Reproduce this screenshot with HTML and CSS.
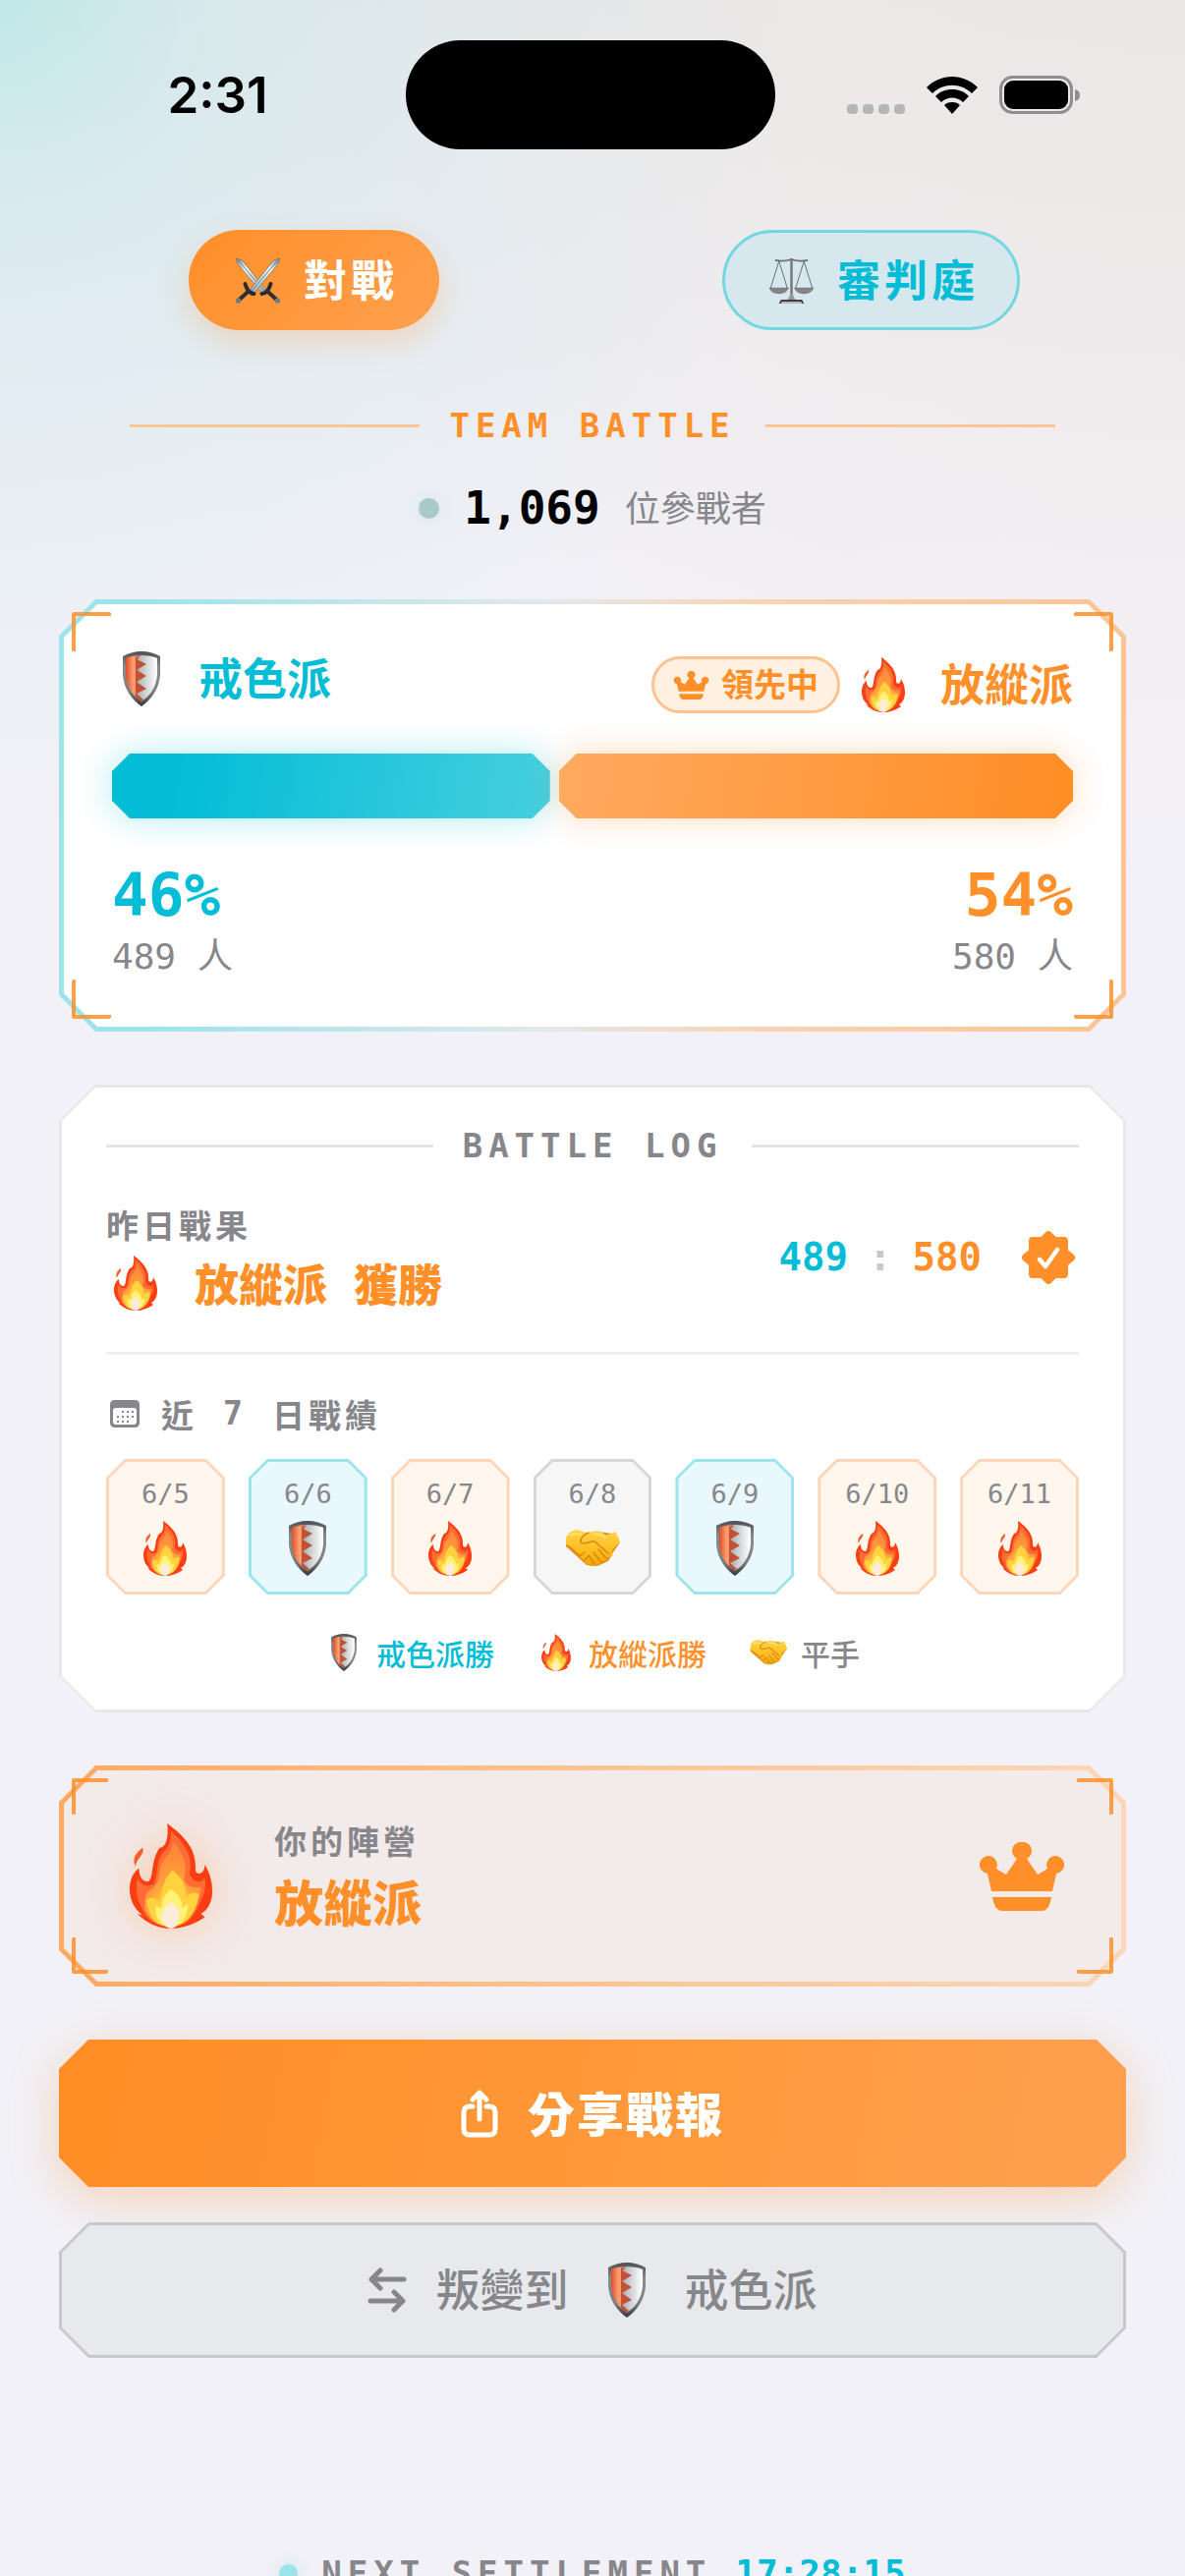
FILE: index.html
```html
<!DOCTYPE html>
<html lang="zh-Hant">
<head>
<meta charset="utf-8">
<meta name="viewport" content="width=device-width, initial-scale=1">
<title>Team Battle</title>
<link rel="stylesheet" href="styles.css">
</head>
<body>
<svg class="sprite" width="0" height="0" aria-hidden="true">
  <defs>
    <radialGradient id="fire-core" cx="0.5" cy="0.9" r="0.75">
      <stop offset="0" stop-color="#fff58a"/><stop offset="0.3" stop-color="#ffd03a"/><stop offset="0.62" stop-color="#ff9f3c"/><stop offset="1" stop-color="#ff8a3a"/>
    </radialGradient>
    <linearGradient id="shield-right" x1="0" x2="1" y1="0" y2="0">
      <stop offset="0" stop-color="#a9adb0"/><stop offset="0.5" stop-color="#d5d9dc"/><stop offset="1" stop-color="#ffffff"/>
    </linearGradient>
    <linearGradient id="shield-left" x1="0" x2="1" y1="0" y2="0">
      <stop offset="0" stop-color="#dc4f2b"/><stop offset="0.5" stop-color="#ffa273"/><stop offset="1" stop-color="#d35a38"/>
    </linearGradient>
    <linearGradient id="shield-rim" x1="0" x2="0" y1="0" y2="1">
      <stop offset="0" stop-color="#4e4f52"/><stop offset="0.3" stop-color="#8b8c8f"/><stop offset="0.75" stop-color="#7d7e81"/><stop offset="1" stop-color="#333436"/>
    </linearGradient>
    <linearGradient id="hand-skin" x1="0" x2="0" y1="0" y2="1">
      <stop offset="0" stop-color="#ffd54a"/><stop offset="0.6" stop-color="#fcbc1d"/><stop offset="1" stop-color="#f0a010"/>
    </linearGradient>
    <linearGradient id="blade" x1="0" x2="1" y1="0" y2="1">
      <stop offset="0" stop-color="#77858c"/><stop offset="0.3" stop-color="#e9f4f6"/><stop offset="1" stop-color="#a3b3b9"/>
    </linearGradient>
  </defs>
  <symbol id="fire" viewBox="0 0 44 56">
    <path fill="#fb3d12" d="M20 0C28 6 36 13 35 25C36 28 40 27 40 22C44 28 45 37 43 42C42 45 40 47 38 48L40 50C34 54 28 56 22 56C15 56 9 53 4 48L7 49C2 45 0 40 0 35C0 30 2 26 5 24C5 29 7 31 10 31C13 29 11 20 16 13C19 13 21 8 20 0Z"/>
    <path fill="#f4602b" d="M7 13C8 17 4 18 3 23C1 18 4 15 7 13Z"/>
    <path fill="#ff6b35" d="M22 4C29 10 34 17 32 27C34 32 38 32 40 29C41 33 40 38 37 43C34 51 29 55 22 55C14 55 9 51 7 46C4 41 3 36 4 29C6 33 10 34 13 32C15 26 14 20 18 15C21 13 22 9 22 4Z"/>
    <path fill="url(#fire-core)" d="M23 10C29 16 31 22 29 30C31 35 36 34 38 34C38 39 35 43 33 45C31 52 27 55 22 55C15 55 11 51 8 46C8 41 8 38 10 36C14 34 16 30 16 25C17 18 23 17 23 10Z"/>
    <path fill="#ffd23e" d="M23 25C29 30 30 34 30 39C33 37 35 36 37 38C36 46 31 55 22 55C13 55 10 48 9 41C12 38 15 41 16 42C17 36 18 29 23 25Z"/>
    <path fill="#fff276" d="M22 35C27 38 28 42 28 45L31 43C31 49 28 55 22 55C16 55 13 50 14 44L17 45C17 41 19 37 22 35Z"/>
    <path fill="#fdebdc" d="M22 42C26 44 27 48 26 51Q25 56 22 56Q17 55 17 50C17 47 19 44 22 42Z"/>
  </symbol>
  <symbol id="shield" viewBox="0 0 38 56">
    <path fill="url(#shield-rim)" d="M19 0C26 0 33 2 38 5V24C37 38 29 49 19 56C9 49 1 38 0 24V5C5 2 12 0 19 0Z"/>
    <path fill="url(#shield-left)" d="M19 4C13 4 7 5 3 7V24C4 36 10 45 19 51Z"/>
    <path fill="url(#shield-right)" d="M16 4C25 4 31 5 35 7V24C34 36 28 45 19 51L14 45Z"/>
    <path fill="#c25235" d="M13 6L19 4L14 8L24 13L14 19L24 25L14 31L24 38L14 43L21 49L19 51L13 46Z"/>
  </symbol>
  <symbol id="handshake" viewBox="0 0 56 38">
    <path fill="#e48d10" d="M1 14L12 3L24 4L35 2L47 4L56 13L49 23L44 32L33 37L22 36L11 26L1 17Z"/>
    <path fill="url(#hand-skin)" d="M1 9C2 4 6 1 12 0C17 1 20 3 24 3C29 1 36 0 41 5C45 6 48 3 51 2C53 5 55 9 56 13C53 16 50 18 48 21C50 26 47 29 44 28C43 32 40 33 37 32C36 36 33 37 31 35C29 38 25 38 24 35C21 35 19 33 20 31C17 31 15 28 16 26C11 23 8 17 1 15Z"/>
    <path fill="none" stroke="#d98812" stroke-width="1.5" stroke-linecap="round" d="M24 3C19 5 15 9 16 13C20 16 25 11 30 12L44 24M34 20L42 29M29 23L36 32M24 26L30 35M20 31L24 27M16 26L20 23"/>
    <path fill="none" stroke="#ffe27a" stroke-width="2" stroke-linecap="round" d="M29 5C34 3 38 6 41 8M5 6C9 3 13 4 17 5"/>
  </symbol>
  <symbol id="swords" viewBox="0 0 46 47">
    <g id="sword-one">
      <path fill="url(#blade)" stroke="#59666d" stroke-width="0.6" d="M1 1L7 3L31 33L27 36L2 6Z"/>
      <path fill="none" stroke="#65737a" stroke-width="0.9" d="M3 3L29 34"/>
      <path fill="none" stroke="#2a2b2d" stroke-width="4" stroke-linecap="round" d="M27 37Q33 37 36 27"/>
      <path stroke="#2f3032" stroke-width="4" d="M31 33L42 43"/>
      <circle cx="43" cy="44" r="2.700" fill="#76797d"/>
    </g>
    <use href="#sword-one" transform="matrix(-1 0 0 1 46 0)"/>
  </symbol>
  <symbol id="scales" viewBox="0 0 48 48">
    <g fill="none" stroke="#6d6b6d" stroke-width="1">
      <path d="M11 4L2 33M11 4L20 33M37 4L28 33M37 4L46 33"/>
      <path stroke-width="1.800" d="M7 3Q16 5 24 2Q32 5 41 3"/>
      <path stroke="#7b797b" stroke-width="2.600" d="M24 1V43"/>
      <path stroke="#4c4a4c" d="M1 32H21M27 32H47"/>
    </g>
    <path fill="#858386" d="M1 32H21Q19 38 11 38Q3 38 1 32ZM27 32H47Q45 38 37 38Q29 38 27 32Z"/>
    <path fill="#9a989a" d="M23 38H25L28 44H20Z"/>
    <path fill="#423f41" d="M13 44H35L37 48H11Z"/>
    <path fill="#b9b7b9" d="M14 46H34L35 48H13Z"/>
  </symbol>
  <symbol id="crown" viewBox="0 0 88 70">
    <path fill="currentColor" d="M44 0A9 9 0 0 1 49 17L60 33L70 27A9 9 0 1 1 79 32L75 50H13L9 32A9 9 0 1 1 18 27L28 33L39 17A9 9 0 0 1 44 0Z"/>
    <path fill="currentColor" d="M14 56H74Q72 70 64 70H24Q16 70 14 56Z"/>
  </symbol>
</svg>

<div class="screen">
  <header class="status">
    <time class="status__time">2:31</time>
    <div class="status__island"></div>
    <div class="status__icons">
      <span class="cell"><i></i><i></i><i></i><i></i></span>
      <svg class="wifi" viewBox="0 0 52 38" aria-hidden="true">
        <path d="M26 0C36 0 45 4 52 11L46 17C35 6 17 6 6 17L0 11C7 4 16 0 26 0Z"/>
        <path d="M26 13C33 13 38 15 43 20L37 26C31 20 21 20 15 26L9 20C14 15 19 13 26 13Z"/>
        <path d="M26 26C30 26 32 27 34 29L26 38L18 29C20 27 22 26 26 26Z"/>
      </svg>
      <svg class="battery" viewBox="0 0 82 39" aria-hidden="true">
        <rect x="1.500" y="1.500" width="72" height="36" rx="12" fill="none" stroke="#8e8e92" stroke-width="3"/>
        <rect x="5" y="5" width="65" height="29" rx="9"/>
        <path fill="#8e8e92" d="M77 14Q82 15 82 20Q82 25 77 26Z"/>
      </svg>
    </div>
  </header>

  <nav class="tabs">
    <button class="tab tab--active" type="button"><svg class="tab__icon" aria-hidden="true"><use href="#swords"/></svg><span class="tab__text">對戰</span></button>
    <button class="tab" type="button"><svg class="tab__icon" aria-hidden="true"><use href="#scales"/></svg><span class="tab__text">審判庭</span></button>
  </nav>

  <h1 class="rule rule--accent">TEAM BATTLE</h1>

  <p class="players"><span class="players__dot"></span><strong class="players__count">1,069</strong><span class="players__unit">位參戰者</span></p>

  <main class="content">
    <section class="panel panel--versus">
      <span class="bracket bracket--tl"></span><span class="bracket bracket--tr"></span><span class="bracket bracket--bl"></span><span class="bracket bracket--br"></span>
      <div class="teams">
        <div class="team team--guard"><svg class="emoji" aria-hidden="true"><use href="#shield"/></svg><h2 class="team__name">戒色派</h2></div>
        <div class="team team--flame">
          <span class="badge"><svg class="badge__crown" aria-hidden="true"><use href="#crown"/></svg><span class="badge__text">領先中</span></span>
          <svg class="emoji" aria-hidden="true"><use href="#fire"/></svg><h2 class="team__name">放縱派</h2>
        </div>
      </div>
      <div class="bars">
        <div class="bar bar--guard" style="flex-grow:46"><div class="bar__fill"></div></div>
        <div class="bar bar--flame" style="flex-grow:54"><div class="bar__fill"></div></div>
      </div>
      <div class="totals">
        <div class="total"><strong class="total__percent guard">46%</strong><span class="total__count"><span>489</span><span>人</span></span></div>
        <div class="total total--end"><strong class="total__percent flame">54%</strong><span class="total__count"><span>580</span><span>人</span></span></div>
      </div>
    </section>

    <section class="panel panel--log">
      <h2 class="rule">BATTLE LOG</h2>
      <div class="result">
        <div class="result__main">
          <h3 class="label">昨日戰果</h3>
          <p class="winner flame"><svg class="emoji" aria-hidden="true"><use href="#fire"/></svg><span>放縱派</span><span class="winner__verb">獲勝</span></p>
        </div>
        <p class="score"><span class="guard">489</span><span class="score__colon">:</span><span class="flame">580</span></p>
        <svg class="seal" viewBox="0 0 54 54" aria-hidden="true">
          <path fill="#ff9029" stroke="#ff9029" stroke-width="8" stroke-linejoin="round" d="M27 4L33 10H43V21L50 27L43 33V44H33L27 50L21 44H11V33L4 27L11 21V10H21Z"/>
          <path fill="none" stroke="#fff" stroke-width="4.500" stroke-linecap="round" stroke-linejoin="round" d="M18 29L24 36L36 19"/>
        </svg>
      </div>
      <h3 class="label label--week">
        <svg class="calendar" viewBox="0 0 30 28" aria-hidden="true">
          <path fill="currentColor" fill-rule="evenodd" d="M5 0H25Q30 0 30 5V23Q30 28 25 28H5Q0 28 0 23V5Q0 0 5 0ZM6 8Q3 8 3 11V22Q3 25 6 25H24Q27 25 27 22V11Q27 8 24 8Z"/>
          <path stroke="currentColor" stroke-width="2" stroke-dasharray="2 3" d="M12 12H24M7 17H24M7 22H19"/>
        </svg>
        <span>近</span><span class="mono">7</span><span>日戰績</span>
      </h3>
      <ol class="days">
        <li class="day day--flame"><span>6/5</span><svg class="emoji" role="img" aria-label="放縱派勝"><use href="#fire"/></svg></li>
        <li class="day day--guard"><span>6/6</span><svg class="emoji" role="img" aria-label="戒色派勝"><use href="#shield"/></svg></li>
        <li class="day day--flame"><span>6/7</span><svg class="emoji" role="img" aria-label="放縱派勝"><use href="#fire"/></svg></li>
        <li class="day"><span>6/8</span><svg class="emoji emoji--hands" role="img" aria-label="平手"><use href="#handshake"/></svg></li>
        <li class="day day--guard"><span>6/9</span><svg class="emoji" role="img" aria-label="戒色派勝"><use href="#shield"/></svg></li>
        <li class="day day--flame"><span>6/10</span><svg class="emoji" role="img" aria-label="放縱派勝"><use href="#fire"/></svg></li>
        <li class="day day--flame"><span>6/11</span><svg class="emoji" role="img" aria-label="放縱派勝"><use href="#fire"/></svg></li>
      </ol>
      <ul class="legend">
        <li class="guard"><svg class="legend__icon" aria-hidden="true"><use href="#shield"/></svg>戒色派勝</li>
        <li class="flame"><svg class="legend__icon" aria-hidden="true"><use href="#fire"/></svg>放縱派勝</li>
        <li><svg class="legend__icon" aria-hidden="true"><use href="#handshake"/></svg>平手</li>
      </ul>
    </section>

    <section class="panel panel--camp">
      <span class="bracket bracket--tl"></span><span class="bracket bracket--tr"></span><span class="bracket bracket--bl"></span><span class="bracket bracket--br"></span>
      <svg class="camp__fire" aria-hidden="true"><use href="#fire"/></svg>
      <div class="camp__text">
        <h3 class="label">你的陣營</h3>
        <p class="camp__name flame">放縱派</p>
      </div>
      <svg class="camp__crown flame" aria-hidden="true"><use href="#crown"/></svg>
    </section>

    <div class="share-wrap">
      <button class="share" type="button">
        <svg class="share__icon" viewBox="0 0 38 49" fill="none" stroke="currentColor" stroke-width="5" stroke-linecap="round" stroke-linejoin="round" aria-hidden="true"><path d="M12 17H9Q3 17 3 23V40Q3 46 9 46H29Q35 46 35 40V23Q35 17 29 17H26M19 30V4M12 10L19 3L26 10"/></svg>
        <span class="share__text">分享戰報</span>
      </button>
    </div>

    <button class="defect" type="button">
      <svg class="defect__icon" viewBox="0 0 40 46" fill="none" stroke="currentColor" stroke-width="5" stroke-linecap="round" stroke-linejoin="round" aria-hidden="true"><path d="M37 12H4M13 3L4 12L13 21M3 34H36M27 25L36 34L27 43"/></svg>
      <span class="defect__text">叛變到</span>
      <svg class="emoji" aria-hidden="true"><use href="#shield"/></svg>
      <span class="defect__text">戒色派</span>
    </button>
  </main>

  <footer class="settlement"><span class="settlement__dot"></span><span class="settlement__label">NEXT SETTLEMENT</span><time class="settlement__time">17:28:15</time></footer>
</div>
</body>
</html>
```
FILE: styles.css
```css
:root {
  --guard: #03bdd7;
  --flame: #ff9029;
  --grey: #86868b;
  --cjk: "Noto Sans CJK TC", "Noto Sans CJK SC", sans-serif;
  --mono: "DejaVu Sans Mono", "Noto Sans CJK TC", monospace;
}

* { box-sizing: border-box; }

body {
  margin: 0;
  background: #f2f1f7;
  color: var(--grey);
  font-family: var(--cjk);
}

h1, h2, h3, p, ul, ol { margin: 0; padding: 0; list-style: none; }
button { border: 0; padding: 0; font: inherit; cursor: pointer; }
svg { display: block; flex: none; }

.sprite { position: absolute; }
.guard { color: var(--guard); }
.flame { color: var(--flame); }
.mono { font-family: var(--mono); }

/* CJK glyphs sit low in their line box, so these labels carry space below */
.tab__text, .team__name, .badge__text, .players__unit, .label, .camp__name, .share__text, .defect__text {
  padding-bottom: 4px;
}

.screen {
  height: 100vh;
  overflow: hidden;
  padding-top: 41px;
  background:
    radial-gradient(circle at 0 0, rgba(3, 220, 215, .18) 0, rgba(3, 200, 215, .08) 220px, rgba(3, 189, 215, .04) 500px, rgba(3, 189, 215, 0) 850px),
    radial-gradient(circle at 100% 0, rgba(225, 180, 130, .08) 0, rgba(250, 190, 150, .07) 450px, rgba(255, 144, 41, 0) 900px),
    linear-gradient(#ebebed, #eeeef2 260px, #f2f1f7 640px);
}

/* Status bar */
.status {
  display: flex;
  align-items: center;
  height: 111px;
}
.status__time {
  flex: 1;
  padding-left: 30px;
  text-align: center;
  color: #000;
  font: 600 51px/60px Inter, sans-serif;
}
.status__island {
  width: 376px;
  height: 111px;
  border-radius: 56px;
  background: #000;
}
.status__icons {
  flex: 1;
  display: flex;
  justify-content: center;
  align-items: center;
  gap: 22px;
  padding-right: 34px;
}
.cell { display: flex; gap: 5px; padding-top: 28px; }
.cell i { width: 11px; height: 10px; border-radius: 4px; background: #b3b8b7; }
.wifi { width: 52px; height: 38px; }
.battery { width: 82px; height: 39px; }

/* Tabs */
.tabs {
  display: grid;
  grid-template-columns: 1fr 1fr;
  justify-items: center;
  padding: 82px 36px 0;
}
.tab {
  display: flex;
  align-items: center;
  gap: 18px;
  height: 102px;
  padding: 0 39px;
  border: 3px solid #73d7e2;
  border-radius: 51px;
  background: #d6e8ee;
  color: var(--guard);
  font-size: 44px;
  font-weight: 700;
  line-height: 60px;
  letter-spacing: 4px;
}
.tab--active {
  padding: 0 42px;
  border: 0;
  background: linear-gradient(135deg, #ff8f28, #ffa04f);
  color: #fff;
  box-shadow: 0 12px 30px rgba(255, 144, 41, .25);
}
.tab__icon { width: 57px; height: 47px; }

/* Section heading with a line on each side */
.rule {
  display: flex;
  align-items: center;
  gap: 30px;
  font: 700 34px/40px var(--mono);
  letter-spacing: 6px;
}
.rule::before, .rule::after {
  content: "";
  flex: 1;
  height: 3px;
  background: #e5e5e5;
}
.rule--accent { padding: 77px 132px 0; color: var(--flame); }
.rule--accent::before, .rule--accent::after { background: #fbc695; }

.players {
  display: flex;
  justify-content: center;
  align-items: center;
  gap: 25px;
  padding: 35px 0 64px;
  font-size: 36px;
  line-height: 58px;
}
.players__dot {
  width: 21px;
  height: 21px;
  border-radius: 50%;
  background: #a9c9ca;
  box-shadow: 0 0 18px rgba(3, 189, 215, .12);
}
.players__count { color: #000; font: 700 46px/58px var(--mono); }
.players__unit { line-height: 54px; }

.content {
  display: flex;
  flex-direction: column;
  gap: 54px;
  padding: 0 60px;
}

/* Panel with cut corners: border colour behind, fill in front */
.panel, .defect {
  --cut: 37px;
  --border: 5px;
  --edge: #e8e8e8;
  --fill: #fff;
  position: relative;
  z-index: 0;
}
.panel::before, .panel::after, .defect::before, .defect::after, .day::before, .day::after {
  content: "";
  position: absolute;
  z-index: -1;
  clip-path: polygon(var(--cut) 0, calc(100% - var(--cut)) 0, 100% var(--cut), 100% calc(100% - var(--cut)), calc(100% - var(--cut)) 100%, var(--cut) 100%, 0 calc(100% - var(--cut)), 0 var(--cut));
}
.panel::before, .defect::before, .day::before { inset: 0; background: var(--edge); }
.panel::after, .defect::after, .day::after {
  --cut: var(--cut-inner, 34px);
  inset: var(--border);
  background: var(--fill);
}

.bracket {
  position: absolute;
  width: 40px;
  height: 40px;
  border: 0 solid rgba(255, 144, 41, .85);
  border-radius: 2px;
}
.bracket--tl { top: 13px; left: 13px; border-width: 4px 0 0 4px; }
.bracket--tr { top: 13px; right: 13px; border-width: 4px 4px 0 0; }
.bracket--bl { bottom: 13px; left: 13px; border-width: 0 0 4px 4px; }
.bracket--br { bottom: 13px; right: 13px; border-width: 0 4px 4px 0; }

.emoji { width: 60px; height: 56px; }
.emoji--hands { padding: 0 2px; }

/* Versus */
.panel--versus {
  --edge: linear-gradient(90deg, #9ce4ea 8%, #e3e8eb 46%, #f9d4b6 65%, #fcc598 95%);
  padding: 54px;
}
.teams {
  display: flex;
  justify-content: space-between;
  align-items: flex-start;
  height: 66px;
}
.team { display: flex; align-items: center; }
.team--guard { height: 54px; color: var(--guard); }
.team--flame { height: 66px; color: var(--flame); }
.team__name {
  margin-left: 28px;
  font-size: 45px;
  font-weight: 700;
  line-height: 50px;
}
.badge {
  display: flex;
  align-items: center;
  gap: 12px;
  height: 58px;
  margin-right: 14px;
  padding: 0 19px;
  border: 3px solid #fcc28f;
  border-radius: 29px;
  background: #fff0e2;
  font-size: 33px;
  font-weight: 700;
  line-height: 40px;
}
.badge__crown { width: 37px; height: 29px; }

.bars { display: flex; gap: 9px; padding: 37px 0 42px; }
.bar { flex-basis: 0; height: 66px; }
.bar--guard { filter: drop-shadow(0 0 18px rgba(3, 189, 215, .3)); }
.bar--flame { filter: drop-shadow(0 0 18px rgba(255, 144, 41, .3)); }
.bar__fill {
  height: 100%;
  background: linear-gradient(100deg, var(--guard) 15%, #46cfdf);
  clip-path: polygon(18px 0, calc(100% - 18px) 0, 100% 18px, 100% calc(100% - 18px), calc(100% - 18px) 100%, 18px 100%, 0 calc(100% - 18px), 0 18px);
}
.bar--flame .bar__fill { background: linear-gradient(100deg, #ffaa60, #ff8d24); }

.totals { display: flex; justify-content: space-between; }
.total { display: flex; flex-direction: column; gap: 5px; }
.total--end { align-items: flex-end; }
.total__percent { font: 700 61px/72px var(--mono); }
.total__count {
  display: flex;
  gap: 22px;
  font: 400 36px/44px var(--mono);
}

/* Log */
.panel--log {
  --border: 3px;
  display: flex;
  flex-direction: column;
  padding: 42px 48px 39px;
}
.label {
  font-size: 33px;
  font-weight: 700;
  line-height: 40px;
  letter-spacing: 4px;
}
.result {
  display: flex;
  align-items: center;
  margin-top: 40px;
  padding-bottom: 42px;
  border-bottom: 3px solid #efefef;
}
.result__main { flex: 1; }
.winner {
  display: flex;
  align-items: center;
  margin-top: 8px;
  font-size: 45px;
  font-weight: 900;
  line-height: 56px;
}
.winner .emoji { margin-right: 30px; }
.winner__verb { margin-left: 27px; }
.score {
  display: flex;
  gap: 21px;
  font: 700 39px/50px var(--mono);
}
.score__colon { color: #c7c8cb; }
.seal { width: 54px; height: 54px; margin: 0 4px 0 41px; }

.label--week {
  display: flex;
  align-items: center;
  gap: 26px;
  margin-top: 40px;
  padding-left: 4px;
}
.calendar { width: 30px; height: 28px; margin-right: -4px; }

.days { display: flex; gap: 24px; margin-top: 22px; }
.day {
  --cut: 19px;
  --cut-inner: 17px;
  --border: 3px;
  --edge: #d5d6d8;
  --fill: #f6f6f7;
  position: relative;
  z-index: 0;
  flex: 1;
  display: flex;
  flex-direction: column;
  align-items: center;
  gap: 11px;
  padding: 20px 0 19px;
  font: 400 27px/32px var(--mono);
}
.day--flame { --edge: #fcd6b8; --fill: #fff6ed; }
.day--guard { --edge: #9de5ed; --fill: #e8f8fc; }

.legend {
  display: flex;
  justify-content: center;
  gap: 44px;
  margin-top: 38px;
  padding-bottom: 1px;
  font-size: 30px;
  font-weight: 500;
  line-height: 42px;
}
.legend li { display: flex; align-items: center; gap: 14px; }
.legend__icon { width: 38px; height: 38px; }

/* Camp */
.panel--camp {
  --edge: linear-gradient(90deg, #ffa961, #fcc796 55%, #fcd6b8);
  --fill: #f3eaea;
  display: flex;
  align-items: center;
  padding: 54px;
}
.panel--camp .bracket { width: 37px; height: 37px; }
.camp__fire {
  width: 120px;
  height: 117px;
  padding: 5px 0;
  filter: drop-shadow(0 0 24px rgba(255, 144, 41, .35));
}
.camp__text { flex: 1; padding-left: 45px; }
.camp__name {
  margin-top: 9px;
  font-size: 50px;
  font-weight: 900;
  line-height: 56px;
}
.camp__crown { width: 88px; height: 70px; margin-right: 8px; }

/* Actions */
.share-wrap { filter: drop-shadow(0 12px 24px rgba(255, 144, 41, .3)); }
.share {
  --cut: 30px;
  display: flex;
  justify-content: center;
  align-items: center;
  gap: 30px;
  width: 100%;
  height: 150px;
  background: linear-gradient(100deg, #ff8d25, #ff9a3c 60%, #ffa050);
  clip-path: polygon(var(--cut) 0, calc(100% - var(--cut)) 0, 100% var(--cut), 100% calc(100% - var(--cut)), calc(100% - var(--cut)) 100%, var(--cut) 100%, 0 calc(100% - var(--cut)), 0 var(--cut));
  color: #fff;
  font-size: 48px;
  font-weight: 900;
  line-height: 60px;
  letter-spacing: 2px;
}
.share__icon { width: 38px; height: 49px; }

.defect {
  --cut: 30px;
  --cut-inner: 28px;
  --border: 3px;
  --edge: #c7c8cb;
  --fill: #e8e9ed;
  display: flex;
  justify-content: center;
  align-items: center;
  gap: 29px;
  height: 138px;
  margin-top: -18px;
  background: none;
  color: var(--grey);
  font-size: 45px;
  font-weight: 500;
  line-height: 60px;
}
.defect__icon { width: 40px; height: 46px; }

.settlement {
  display: flex;
  justify-content: center;
  align-items: center;
  gap: 24px;
  margin-top: 197px;
  font: 400 34px/44px var(--mono);
}
.settlement__dot {
  width: 19px;
  height: 19px;
  border-radius: 50%;
  background: #9ce4ea;
  box-shadow: 0 0 18px rgba(3, 189, 215, .2);
}
.settlement__label { font-weight: 700; letter-spacing: 6px; }
.settlement__time { color: var(--guard); font-weight: 700; font-size: 36px; }
```
